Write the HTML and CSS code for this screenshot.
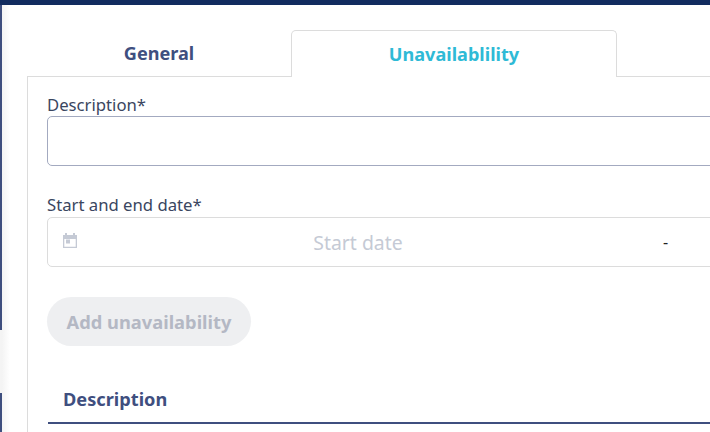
FILE: index.html
```html
<!DOCTYPE html>
<html>
<head>
<meta charset="utf-8">
<title>Unavailability</title>
<link rel="stylesheet" href="styles.css">
</head>
<body>
<div class="topbar"></div>
<div class="page">
  <div class="rail">
    <div class="rail-top"></div>
    <div class="rail-gap"></div>
    <div class="rail-bottom"></div>
  </div>
  <div class="content">
    <div class="tabs">
      <div class="tab">General</div>
      <div class="tab tab-active">Unavailablility</div>
      <div class="tab-rest"></div>
    </div>
    <div class="panel">
      <label class="label">Description*</label>
      <div class="input"></div>
      <label class="label label-date">Start and end date*</label>
      <div class="date">
        <svg class="date-icon" width="14" height="15" viewBox="0 0 14 15">
          <path fill="#c5cad5" fill-rule="evenodd" d="M2 0h2v2h6v-2h2v2h2v13h-14v-13h2zM1.300 6v7.700h11.400v-7.700z"/>
          <rect x="3" y="6.500" width="4" height="4" fill="#c5cad5"/>
        </svg>
        <span class="date-start">Start date</span>
        <span class="date-sep">-</span>
      </div>
      <button class="add-btn" disabled>Add unavailability</button>
      <div class="table-head">Description</div>
    </div>
  </div>
</div>
</body>
</html>
```
FILE: styles.css
```css
*{
	margin:0;
	padding:0;
	box-sizing:border-box;
}
html,body{
	height:100%;
	overflow:hidden;
}
body{
	width:710px;
	height:432px;
	background:#fff;
	font-family:"Noto Sans","Open Sans",sans-serif;
	color:#3a4660;
	display:flex;
	flex-direction:column;
}
.topbar{
	height:5px;
	background:#122c5f;
	flex:none;
}
.page{
	flex:1;
	display:flex;
	min-height:0;
}
.rail{
	width:2px;
	flex:none;
	display:flex;
	flex-direction:column;
}
.rail-top{
	height:325px;
	background:#3f4f7f;
}
.rail-gap{
	height:63px;
	background:#f4f4f4;
}
.rail-bottom{
	flex:1;
	background:#3f4f7f;
}
.content{
	flex:1;
	padding:25px 0 0 25px;
	min-width:0;
	overflow:hidden;
	background:linear-gradient(to right,#f4f4f4,#fff 8px);
}
.tabs{
	display:flex;
	height:47px;
}
.tab{
	width:264px;
	border-bottom:1px solid #dcdcdc;
	font-size:18.100px;
	font-weight:700;
	color:#3f4f7f;
	text-align:center;
	line-height:46px;
}
.tab-active{
	width:326px;
	border:1px solid #dcdcdc;
	border-bottom:0;
	border-radius:5px 5px 0 0;
	color:#2fbad6;
}
.tab-rest{
	flex:1;
	border-bottom:1px solid #dcdcdc;
}
.panel{
	border-left:1px solid #dcdcdc;
	padding:17px 0 0 19px;
	height:360px;
}
.label{
	display:block;
	font-size:16.700px;
	line-height:22px;
	color:#3a4660;
}
.input{
	height:50px;
	width:700px;
	border:1px solid #a3aac0;
	border-radius:5px;
}
.label-date{
	margin-top:28px;
}
.date{
	height:50px;
	width:700px;
	margin-top:1px;
	border:1px solid #dcdcdc;
	border-radius:5px;
	display:flex;
	align-items:center;
	padding-left:15px;
}
.date-icon{
	flex:none;
	margin-top:-4px;
}
.date-start{
	width:556px;
	margin-left:3px;
	text-align:center;
	white-space:nowrap;
	font-size:19.400px;
	color:#c5cad5;
}
.date-sep{
	margin-left:27px;
	font-size:16px;
	color:#222;
}
.add-btn{
	display:block;
	margin-top:30px;
	width:204px;
	height:49px;
	border:0;
	border-radius:25px;
	background:#eeeff1;
	color:#b4b8c4;
	font-family:inherit;
	font-size:18.300px;
	font-weight:700;
}
.table-head{
	margin-top:33px;
	margin-left:1px;
	width:700px;
	height:45px;
	padding-left:15px;
	border-bottom:2px solid #3f4f7f;
	font-size:18.200px;
	font-weight:700;
	line-height:40px;
	color:#3f4f7f;
}
```
